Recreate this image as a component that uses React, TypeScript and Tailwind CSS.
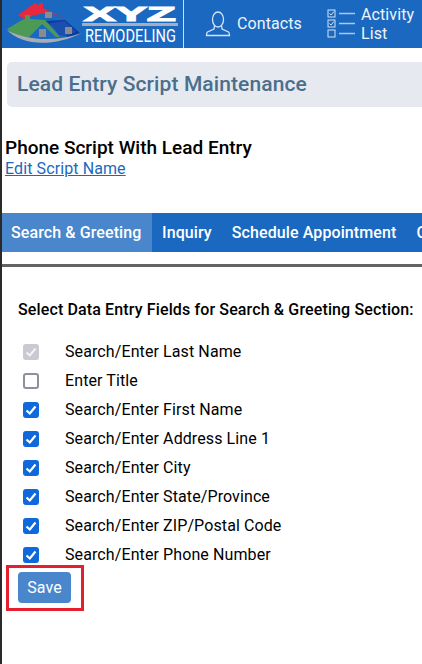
import React from "react";

const fields = [
  { label: "Search/Enter Last Name", checked: true, disabled: true },
  { label: "Enter Title", checked: false },
  { label: "Search/Enter First Name", checked: true },
  { label: "Search/Enter Address Line 1", checked: true },
  { label: "Search/Enter City", checked: true },
  { label: "Search/Enter State/Province", checked: true },
  { label: "Search/Enter ZIP/Postal Code", checked: true },
  { label: "Search/Enter Phone Number", checked: true },
];

function Logo() {
  return (
    <svg width="180" height="48" viewBox="0 0 180 48" className="shrink-0">
      <path d="M16 15 L33 3 L37 5 L37 3 L41 3 L41 8 L62 18 L46 12 L30 16 L22 19Z" fill="#e8283c" />
      <path d="M43 21 L63 20 L78 33 L66 37 L58 34 L52 27Z" fill="#12389a" />
      <path d="M48 23 L63 21 L74 32 L64 36 L57 35Z" fill="#1a4fb0" />
      <path d="M5 29 L20 20 L23 19 L23 15 L28 15 L28 19 L43 20 L58 37 L54 37 L40 24 L27 37 L14 36Z" fill="#4d9a57" />
      <path d="M5 30 C20 46 52 47 80 33 C55 42 25 41 5 30Z" fill="#a9adb3" />
      <path d="M43 12h7v6h-7zM37 29h7v8h-7zM63 27h7v7h-7z" fill="#8b8b8b" />
      <rect x="80" y="23" width="96" height="3" fill="#a8aeb6" />
      <text x="82" y="21" textLength="92" lengthAdjust="spacingAndGlyphs" fontFamily="'Liberation Sans', sans-serif" fontWeight="900" fontSize="21" fill="#fff" stroke="#fff" strokeWidth="1.2">XYZ</text>
      <text x="83" y="42" textLength="91" lengthAdjust="spacingAndGlyphs" fontFamily="Roboto, sans-serif" fontSize="18" fill="#fff">REMODELING</text>
    </svg>
  );
}

function ContactIcon() {
  return (
    <svg width="26" height="26" viewBox="0 0 26 26" fill="none" stroke="#d6e4f5" strokeWidth="1.3" className="shrink-0">
      <ellipse cx="13" cy="8.5" rx="5.5" ry="7.5" />
      <path d="M9.5 14.5 L9 18 L2.5 21 C1.5 21.7 1.5 23 1.5 24.5 H24.5 C24.5 23 24.5 21.7 23.5 21 L17 18 L16.5 14.5" />
    </svg>
  );
}

function ListIcon() {
  return (
    <svg width="28" height="30" viewBox="0 0 28 30" fill="none" stroke="#d6e4f5" className="shrink-0">
      <rect x="1" y="1" width="7" height="7" strokeWidth="1" />
      <rect x="1" y="11" width="7" height="7" strokeWidth="1" />
      <rect x="1" y="21" width="7" height="7" strokeWidth="1" />
      <path d="M2.5 4.5 L4 6 L7 2.5 M2.5 14.5 L4 16 L7 12.5" strokeWidth="1" />
      <path d="M12 4.5 H28 M12 14.5 H28 M12 24.5 H28" strokeWidth="1.4" stroke="#a9c8ea" />
    </svg>
  );
}

function Box({ checked, disabled }: { checked: boolean; disabled?: boolean }) {
  return (
    <span className="relative ml-[5px] flex h-[16px] w-[16px] shrink-0">
      <input
        type="checkbox"
        defaultChecked={checked}
        disabled={disabled}
        className="m-0 h-[16px] w-[16px] appearance-none rounded-[3px] border-2 border-[#8f8f9d] bg-white checked:border-[#0f69dc] checked:bg-[#0f69dc] disabled:checked:border-[#c9c9cf] disabled:checked:bg-[#c9c9cf]"
      />
      {checked && (
        <svg viewBox="0 0 16 16" className="pointer-events-none absolute inset-0 h-[16px] w-[16px]" fill="none" stroke={disabled ? "#f2f2f2" : "#fff"} strokeWidth="2.2">
          <path d="M3.5 8.5 L6.8 11.5 L12.5 4.5" />
        </svg>
      )}
    </span>
  );
}

export default function App() {
  return (
    <div className="relative w-[422px] h-[664px] overflow-hidden bg-white border-l-2 border-[#2a2a2a] font-['Roboto',sans-serif] text-black tracking-[0.1px]">
      <header className="flex h-[48px] items-center bg-[#1a68c0] text-white">
        <div className="flex h-full w-[182px] shrink-0 items-center border-r border-[#cfe0f3]">
          <Logo />
        </div>
        <div className="flex items-center gap-[6px] pl-[21px] text-[16px] text-[#eef4fb]">
          <ContactIcon />
          <span>Contacts</span>
        </div>
        <div className="flex items-center gap-[6px] pl-[25px] text-[16px] leading-[19px] text-[#eef4fb]">
          <ListIcon />
          <span className="block">Activity<br />List</span>
        </div>
      </header>

      <div className="ml-[5px] mt-[14px] flex h-[45px] w-[430px] items-center rounded-[5px] bg-[#e6e9f0] pl-[10px] text-[21px] font-medium text-[#4a6f8c]">
        Lead Entry Script Maintenance
      </div>

      <div className="mt-[29px] pl-[3px]">
        <div className="pt-[1px] text-[19px] font-medium leading-[22px] tracking-normal">Phone Script With Lead Entry</div>
        <a className="block text-[16px] leading-[19px] text-[#1a68c0] underline">Edit Script Name</a>
      </div>

      <nav className="mt-[35px] flex h-[39px] items-center whitespace-nowrap bg-[#1a68c0] text-[16px] font-medium text-white">
        <div className="flex h-full w-[150px] shrink-0 items-center bg-[#4a86cc] pl-[9px]">Search &amp; Greeting</div>
        <div className="pl-[10px]">Inquiry</div>
        <div className="pl-[20px]">Schedule Appointment</div>
        <div className="pl-[20px]">Confirmation</div>
      </nav>

      <div className="mt-[12px] h-[3px] bg-[#636363]" />

      <section className="pl-[16px] pt-[33px]">
        <h2 className="whitespace-nowrap text-[16px] font-medium leading-[19px] tracking-[0.13px]">
          Select Data Entry Fields for Search &amp; Greeting Section:
        </h2>
        <div className="mt-[18px] flex flex-col">
          {fields.map((f) => (
            <label key={f.label} className="flex h-[29px] items-center text-[16px]">
              <Box checked={f.checked} disabled={f.disabled} />
              <span className="ml-[26px]">{f.label}</span>
            </label>
          ))}
        </div>
        <button className="mt-[3px] block h-[31px] w-[53px] rounded-[4px] bg-[#4a86cc] text-[16px] text-white">
          Save
        </button>
      </section>

      <div className="absolute left-[4px] top-[565px] h-[46px] w-[78px] border-[3px] border-[#e4202e]" />
    </div>
  );
}
